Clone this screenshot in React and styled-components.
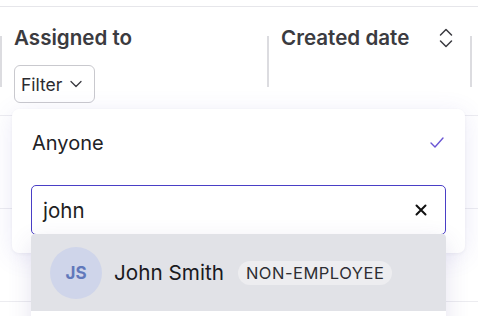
import styled, { createGlobalStyle } from "styled-components";

const GlobalStyle = createGlobalStyle`
  html, body {
    margin: 0;
    padding: 0;
    background: #ffffff;
    font-family: Inter, "Noto Sans", sans-serif;
    overflow: hidden;
  }
  * { box-sizing: border-box; }
`;

const Page = styled.div`
  position: relative;
  width: 478px;
  height: 316px;
  padding-top: 6px;
  overflow: hidden;
`;

const Table = styled.div`
  border-top: 1px solid #e6e6ea;
`;

const HeaderRow = styled.div`
  display: flex;
  height: 109px;
  border-bottom: 1px solid #ececf0;
`;

const HeaderCell = styled.div`
  position: relative;
  width: ${(p) => p.width}px;
  padding: 17px 0 0 ${(p) => p.pad}px;
  &::before {
    content: "";
    position: absolute;
    left: ${(p) => p.divider}px;
    top: 29px;
    height: 51px;
    width: 2px;
    background: #dcdce0;
  }
`;

const HeaderTop = styled.div`
  display: flex;
  align-items: center;
  justify-content: space-between;
  padding-right: 16px;
`;

const HeaderTitle = styled.span`
  font-size: 20.6px;
  font-weight: 600;
  color: #3b3b40;
  line-height: 27px;
`;

const FilterButton = styled.button`
  margin-top: 14px;
  display: flex;
  align-items: center;
  gap: 8px;
  height: 38px;
  padding: 0 12px 0 6px;
  border: 1px solid #c9c9ce;
  border-radius: 6px;
  background: #fff;
  font-family: inherit;
  font-size: 17.5px;
  color: #2b2b30;
`;

const BodyRow = styled.div`
  height: 93px;
  border-bottom: 1px solid #ececf0;
`;

const Dropdown = styled.div`
  position: absolute;
  left: 12px;
  top: 109px;
  width: 453px;
  height: 144px;
  background: #fff;
  border-radius: 7px;
  box-shadow: 0 4px 24px rgba(90, 80, 200, 0.12), 0 1px 3px rgba(60, 60, 90, 0.06);
  padding: 0 19px;
`;

const OptionRow = styled.div`
  display: flex;
  align-items: center;
  justify-content: space-between;
  height: 67px;
  padding: 0 2px 0 1px;
  font-size: 20px;
  color: #222226;
`;

const InputWrap = styled.div`
  position: relative;
  margin-top: 9px;
  height: 50px;
  border: 1px solid #4a3fc6;
  border-radius: 5px;
  display: flex;
  align-items: center;
  justify-content: space-between;
  padding: 0 18px 0 11px;
`;

const InputText = styled.span`
  font-size: 20.5px;
  color: #1e1e22;
`;

const Results = styled.div`
  position: absolute;
  left: -1px;
  right: -1px;
  top: 48px;
  background: #fff;
  box-shadow: 0 8px 24px rgba(70, 60, 140, 0.14);
  border-radius: 4px 4px 0 0;
`;

const ResultRow = styled.div`
  display: flex;
  align-items: center;
  gap: 10px;
  height: 77px;
  padding: 0 19px;
  background: ${(p) => (p.active ? "#e1e2e7" : "#fff")};
  border-radius: 4px 4px 0 0;
`;

const Avatar = styled.div`
  width: 52px;
  height: 52px;
  border-radius: 50%;
  background: #cfd5ea;
  color: #6178bb;
  font-weight: 700;
  font-size: 17px;
  display: flex;
  align-items: center;
  justify-content: center;
  margin-right: 2px;
`;

const Name = styled.span`
  font-size: 20.7px;
  color: #1a1a1e;
`;

const Badge = styled.span`
  margin-left: 4px;
  padding: 2px 8px;
  border-radius: 12px;
  background: #ededf0;
  font-size: 16.5px;
  letter-spacing: 0.5px;
  color: #2e2e33;
`;

const ChevronDown = () => (
  <svg width="12" height="8" viewBox="0 0 12 8" fill="none">
    <path d="M1 1.5l5 5 5-5" stroke="#3a3a40" strokeWidth="1.3" strokeLinecap="round" strokeLinejoin="round" />
  </svg>
);

const SortIcon = () => (
  <svg width="16" height="22" viewBox="0 0 16 22" fill="none">
    <path d="M2.5 8l5.5-5.5 5.5 5.5" stroke="#3a3a40" strokeWidth="1.5" strokeLinecap="round" strokeLinejoin="round" />
    <path d="M2.5 14l5.5 5.5 5.5-5.5" stroke="#3a3a40" strokeWidth="1.5" strokeLinecap="round" strokeLinejoin="round" />
  </svg>
);

const Check = () => (
  <svg width="14" height="11" viewBox="0 0 14 11" fill="none">
    <path d="M1 6l4 4 8-9" stroke="#6a55d4" strokeWidth="1.4" strokeLinecap="round" strokeLinejoin="round" />
  </svg>
);

const Close = () => (
  <svg width="12" height="12" viewBox="0 0 12 12" fill="none">
    <path d="M1.5 1.5l9 9M10.5 1.5l-9 9" stroke="#111" strokeWidth="2" strokeLinecap="round" />
  </svg>
);

export default function App() {
  return (
    <Page>
      <GlobalStyle />
      <Table>
        <HeaderRow>
          <HeaderCell width={268} pad={14} divider={0}>
            <HeaderTitle>Assigned to</HeaderTitle>
            <FilterButton>
              Filter <ChevronDown />
            </FilterButton>
          </HeaderCell>
          <HeaderCell width={202} pad={13} divider={-1}>
            <HeaderTop>
              <HeaderTitle>Created date</HeaderTitle>
              <SortIcon />
            </HeaderTop>
          </HeaderCell>
          <HeaderCell width={8} pad={0} divider={0} />
        </HeaderRow>
        <BodyRow />
        <BodyRow />
      </Table>

      <Dropdown>
        <OptionRow>
          <span>Anyone</span>
          <Check />
        </OptionRow>
        <InputWrap>
          <InputText>john</InputText>
          <Close />
          <Results>
            <ResultRow active>
              <Avatar>JS</Avatar>
              <Name>John Smith</Name>
              <Badge>NON-EMPLOYEE</Badge>
            </ResultRow>
            <ResultRow />
          </Results>
        </InputWrap>
      </Dropdown>
    </Page>
  );
}
